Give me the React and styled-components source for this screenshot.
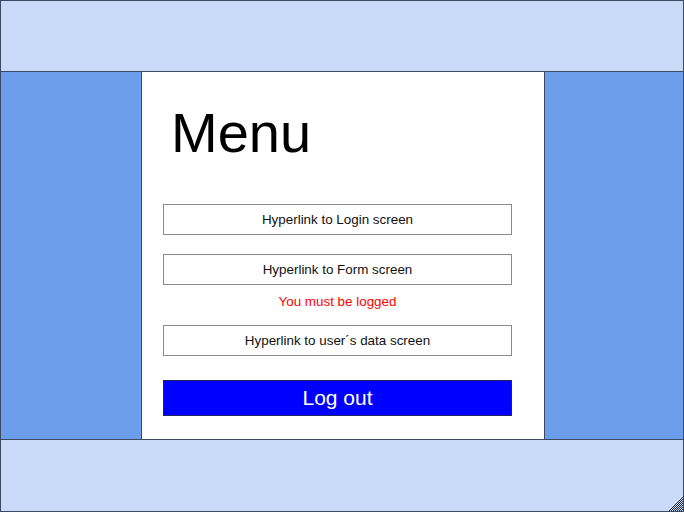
import React from 'react';
import styled, { createGlobalStyle } from 'styled-components';

const GlobalStyle = createGlobalStyle`
  html, body {
    margin: 0;
    padding: 0;
    background: #ffffff;
    font-family: "Liberation Sans", Arial, sans-serif;
  }
`;

const Frame = styled.div`
  position: relative;
  box-sizing: border-box;
  width: 684px;
  height: 512px;
  border: 1px solid #3c4a63;
  display: flex;
  flex-direction: column;
`;

const Band = styled.div`
  height: ${(p) => p.h}px;
  background: #c9daf8;
  ${(p) => (p.top ? 'border-bottom' : 'border-top')}: 1px solid #3c4a63;
  flex-shrink: 0;
`;

const Middle = styled.div`
  flex: 1;
  display: flex;
`;

const Side = styled.div`
  width: ${(p) => p.w}px;
  background: #6d9eeb;
  flex-shrink: 0;
`;

const Panel = styled.div`
  box-sizing: border-box;
  width: 404px;
  background: #ffffff;
  border-left: 1px solid #3c4a63;
  border-right: 1px solid #3c4a63;
  padding: 0 32px 0 21px;
  display: flex;
  flex-direction: column;
`;

const Title = styled.h1`
  margin: 28px 0 0 8px;
  font-weight: normal;
  font-size: 56px;
  line-height: 66px;
  color: #000000;
`;

const LinkButton = styled.a`
  box-sizing: border-box;
  display: flex;
  align-items: center;
  justify-content: center;
  width: 349px;
  height: 31px;
  margin-top: ${(p) => p.mt}px;
  border: 1px solid #8a8a8a;
  background: #ffffff;
  color: #111111;
  font-size: 13.4px;
  text-decoration: none;
`;

const Warning = styled.div`
  width: 349px;
  text-align: center;
  margin-top: 9px;
  font-size: 13.4px;
  line-height: 16px;
  color: #ff0000;
`;

const LogoutButton = styled.button`
  box-sizing: border-box;
  width: 349px;
  height: 36px;
  margin-top: 24px;
  border: 1px solid #222266;
  background: #0000ff;
  color: #ffffff;
  font-family: "Liberation Sans", Arial, sans-serif;
  font-size: 21px;
  padding: 0;
`;

const Grip = styled.svg`
  position: absolute;
  right: 0;
  bottom: 0;
`;

export default function App() {
  return (
    <>
      <GlobalStyle />
      <Frame>
        <Band top h={70} />
        <Middle>
          <Side w={140} />
          <Panel>
            <Title>Menu</Title>
            <LinkButton href="#" mt={38}>Hyperlink to Login screen</LinkButton>
            <LinkButton href="#" mt={19}>Hyperlink to Form screen</LinkButton>
            <Warning>You must be logged</Warning>
            <LinkButton href="#" mt={15}>Hyperlink to user´s data screen</LinkButton>
            <LogoutButton>Log out</LogoutButton>
          </Panel>
          <Side w={138} />
        </Middle>
        <Band h={71} />
        <Grip width="14" height="14" viewBox="0 0 14 14">
          {[0, 2, 4, 6, 8, 10, 12].map((o) => (
            <line key={o} x1={o} y1="14" x2="14" y2={o} stroke="#000" strokeWidth="0.8" />
          ))}
        </Grip>
      </Frame>
    </>
  );
}
